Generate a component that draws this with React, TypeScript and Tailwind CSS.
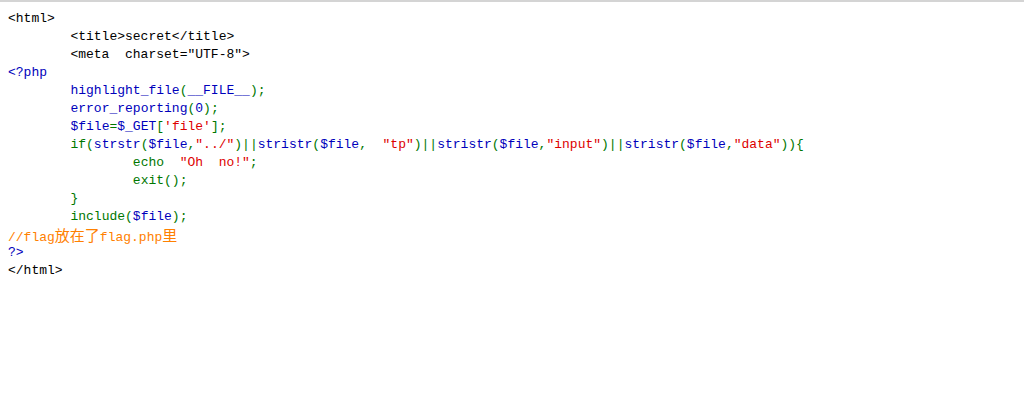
const c = {
  html: "text-[#000000]",
  def: "text-[#0000BB]",
  kw: "text-[#007700]",
  str: "text-[#DD0000]",
  cmt: "text-[#FF8000]",
};

type Seg = [keyof typeof c, string];

const T = "        ";

const lines: Seg[][] = [
  [["html", "<html>"]],
  [["html", T + "<title>secret</title>"]],
  [["html", T + '<meta  charset="UTF-8">']],
  [["def", "<?php"]],
  [["html", T], ["def", "highlight_file"], ["kw", "("], ["def", "__FILE__"], ["kw", ");"]],
  [["html", T], ["def", "error_reporting"], ["kw", "("], ["def", "0"], ["kw", ");"]],
  [["html", T], ["def", "$file"], ["kw", "="], ["def", "$_GET"], ["kw", "["], ["str", "'file'"], ["kw", "];"]],
  [
    ["html", T],
    ["kw", "if("], ["def", "strstr"], ["kw", "("], ["def", "$file"], ["kw", ","], ["str", '"../"'], ["kw", ")||"],
    ["def", "stristr"], ["kw", "("], ["def", "$file"], ["kw", ",  "], ["str", '"tp"'], ["kw", ")||"],
    ["def", "stristr"], ["kw", "("], ["def", "$file"], ["kw", ","], ["str", '"input"'], ["kw", ")||"],
    ["def", "stristr"], ["kw", "("], ["def", "$file"], ["kw", ","], ["str", '"data"'], ["kw", ")){"],
  ],
  [["html", T + T], ["kw", "echo  "], ["str", '"Oh  no!"'], ["kw", ";"]],
  [["html", T + T], ["kw", "exit();"]],
  [["html", T], ["kw", "}"]],
  [["html", T], ["kw", "include("], ["def", "$file"], ["kw", ");"]],
  [["cmt", "//flag"], ["cmt", "放在了"], ["cmt", "flag.php"], ["cmt", "里"]],
  [["def", "?>"]],
  [["html", "</html>"]],
];

function isCjk(s: string) {
  return /[\u4e00-\u9fff]/.test(s);
}

export default function App() {
  return (
    <div className="min-h-[406px] w-full border-t-2 border-[#d4d4d4] bg-white">
      <code className="block px-2 pt-[8px] font-['Liberation_Mono','DejaVu_Sans_Mono','Noto_Sans_CJK_SC',monospace] text-[13px] leading-[18px]">
        {lines.map((line, i) => (
          <div key={i} className="h-[18px] whitespace-pre">
            {line.map(([k, t], j) =>
              isCjk(t) ? (
                <span key={j} className={`${c[k]} text-[15px] font-['Noto_Sans_CJK_SC',sans-serif]`}>
                  {t}
                </span>
              ) : (
                <span key={j} className={c[k]}>
                  {t}
                </span>
              )
            )}
          </div>
        ))}
      </code>
    </div>
  );
}
